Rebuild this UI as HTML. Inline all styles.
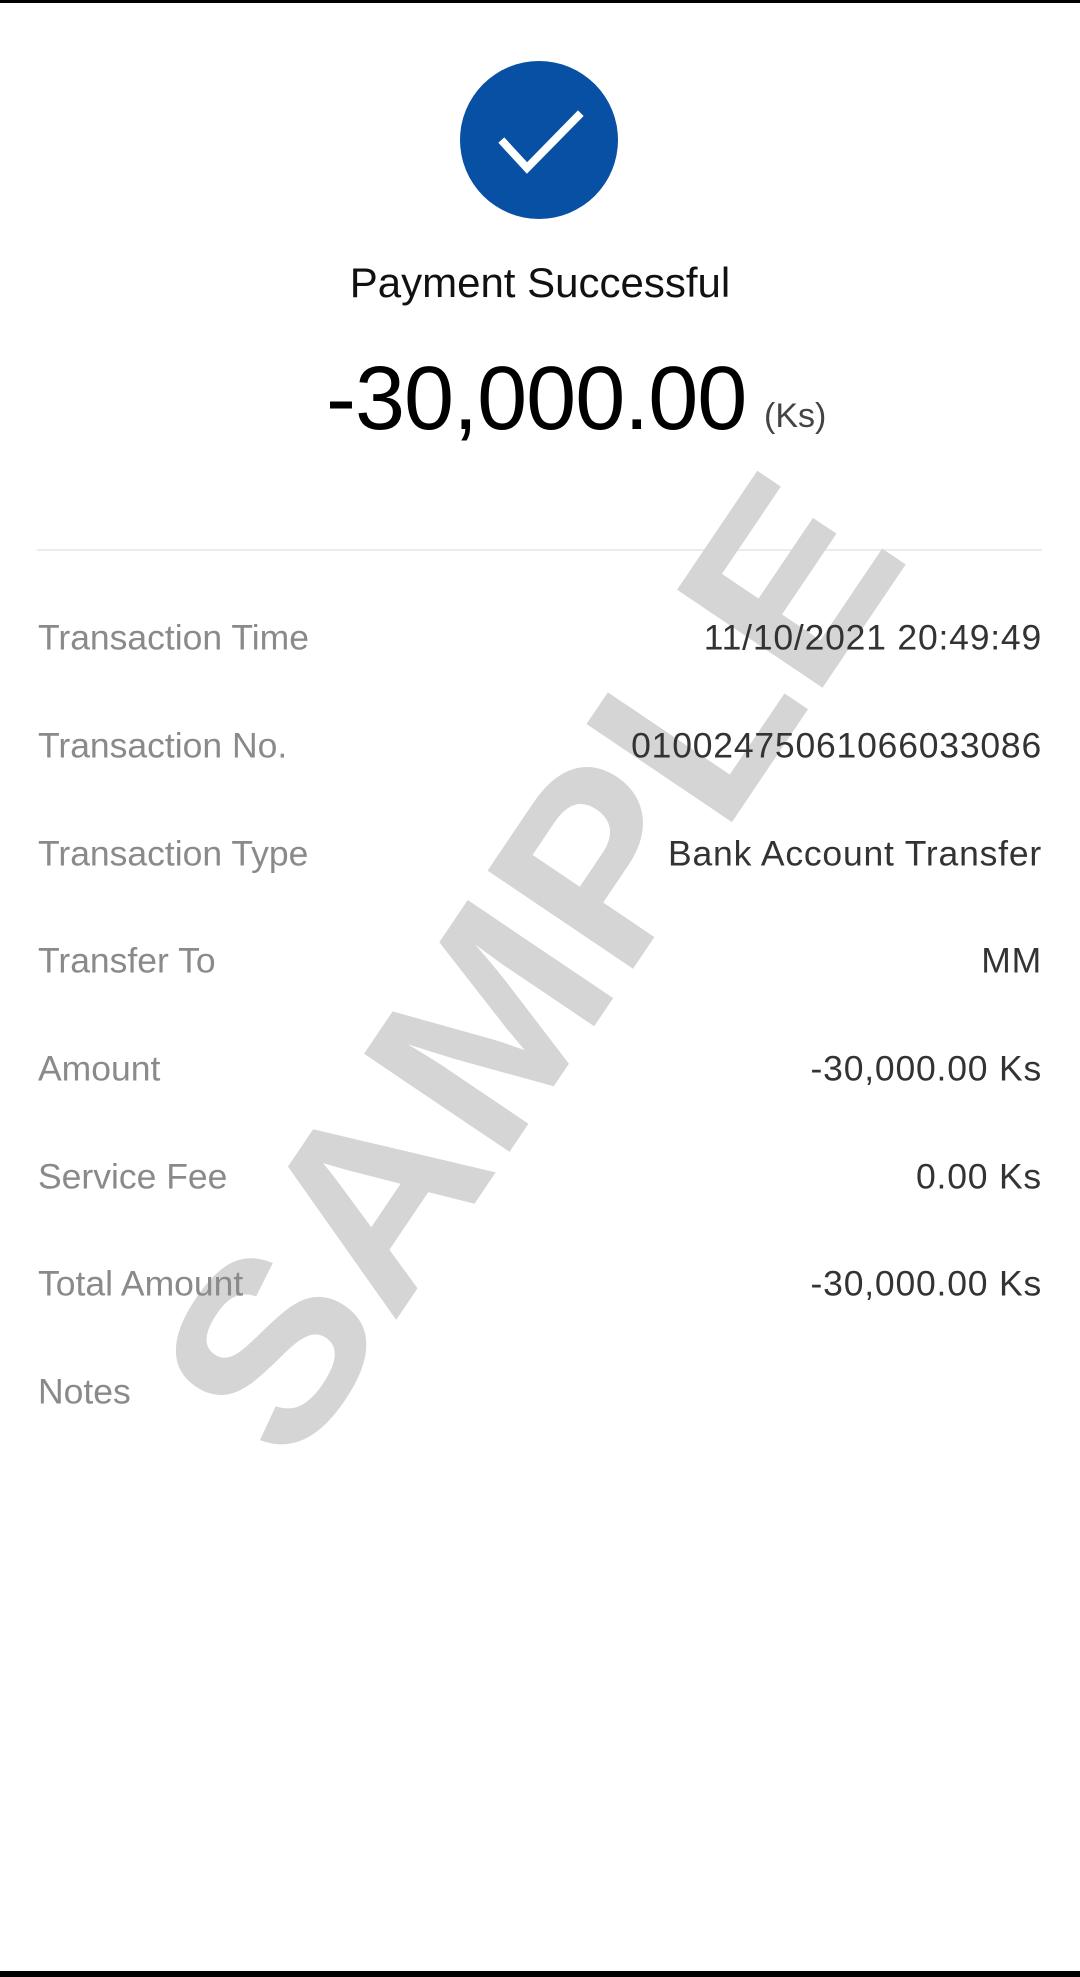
<!DOCTYPE html>
<html><head><meta charset="utf-8"><style>
html,body{margin:0;padding:0;}
body{width:1080px;height:1977px;background:#fff;position:relative;overflow:hidden;font-family:"Liberation Sans",sans-serif;}
.bar{position:absolute;left:0;width:1080px;background:#000;}
.circ{position:absolute;left:460px;top:61px;width:158px;height:158px;border-radius:50%;background:#0750a4;}
.t{position:absolute;white-space:nowrap;}
.wm{position:absolute;left:530px;top:965px;transform:translate(-50%,-50%) rotate(-56deg) scaleX(1.04);font-weight:bold;font-size:255px;color:#d5d5d5;white-space:nowrap;line-height:1;}
.lab{position:absolute;left:38px;font-size:35.5px;color:#8a8a8a;transform:translateY(-50%);}
.val{position:absolute;right:38px;font-size:35.5px;color:#333;transform:translateY(-50%);letter-spacing:0.8px;}
</style></head><body>
<div class="bar" style="top:0;height:3px"></div>
<div class="bar" style="top:1971px;height:6px"></div>
<div class="circ"><svg width="158" height="158" viewBox="0 0 158 158"><path d="M44 82 L67 107 L118 55" fill="none" stroke="#fff" stroke-width="8" stroke-linecap="square" stroke-linejoin="miter"/></svg></div>
<div class="t" style="left:0;width:1080px;text-align:center;top:259px;font-size:42px;color:#111;">Payment Successful</div>
<div class="t" style="left:326px;top:348px;font-size:90px;color:#000;letter-spacing:-1px;">-30,000.00</div>
<div class="t" style="left:764px;top:397px;font-size:34px;color:#444;">(Ks)</div>
<div style="position:absolute;left:37px;top:549px;width:1005px;height:2px;background:#ececec"></div>
<div class="wm">SAMPLE</div>
<div class="lab" style="top:638px">Transaction Time</div><div class="val" style="top:638px">11/10/2021 20:49:49</div>
<div class="lab" style="top:746px">Transaction No.</div><div class="val" style="top:746px">01002475061066033086</div>
<div class="lab" style="top:854px">Transaction Type</div><div class="val" style="top:854px">Bank Account Transfer</div>
<div class="lab" style="top:961px">Transfer To</div><div class="val" style="top:961px">MM</div>
<div class="lab" style="top:1069px">Amount</div><div class="val" style="top:1069px">-30,000.00 Ks</div>
<div class="lab" style="top:1177px">Service Fee</div><div class="val" style="top:1177px">0.00 Ks</div>
<div class="lab" style="top:1284px">Total Amount</div><div class="val" style="top:1284px">-30,000.00 Ks</div>
<div class="lab" style="top:1392px">Notes</div>
</body></html>
